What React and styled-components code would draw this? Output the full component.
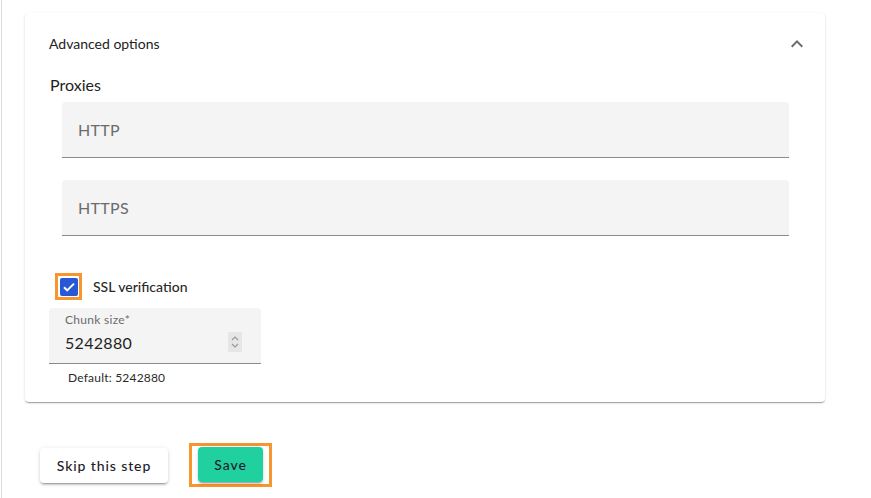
import React from "react";
import styled, { createGlobalStyle } from "styled-components";

const Global = createGlobalStyle`
  html, body { margin: 0; padding: 0; background: #fff; }
  body { font-family: "Lato", "Noto Sans", sans-serif; color: #1f1f1f; }
  * { box-sizing: border-box; }
`;

const Page = styled.div`
  margin-left: 1px;
  border-left: 1px solid #dcdcdc;
  min-height: 498px;
  padding: 13px 0 0 23px;
`;

const Card = styled.section`
  width: 800px;
  background: #fff;
  border-radius: 4px;
  box-shadow: 0 2px 1px -1px rgba(0,0,0,.2), 0 1px 1px 0 rgba(0,0,0,.14), 0 1px 3px 0 rgba(0,0,0,.12);
  padding-bottom: 17px;
`;

const Header = styled.div`
  height: 62px;
  display: flex;
  align-items: center;
  justify-content: space-between;
  padding: 0 16px 0 24px;
  font-size: 14px;
  color: #222;
  span { margin-top: -1px; }
`;

const Body = styled.div`
  padding: 0 24px;
`;

const SectionTitle = styled.div`
  font-size: 16px;
  line-height: 20px;
  color: #222;
  margin-left: 1px;
`;

const Fields = styled.div`
  display: flex;
  flex-direction: column;
  gap: 22px;
  margin: 7px 12px 0 13px;
`;

const FilledField = styled.div`
  height: 56px;
  background: #f4f4f4;
  border-radius: 4px 4px 0 0;
  border-bottom: 1px solid #8a8a8a;
  display: flex;
  align-items: center;
  padding: 0 16px;
  font-size: 16px;
  color: #6b6b6b;
  letter-spacing: 0.3px;
`;

const CheckRow = styled.label`
  display: flex;
  align-items: center;
  gap: 11px;
  margin: 37px 0 0 6px;
  font-size: 14px;
  font-weight: 500;
  color: #2a2a2a;
`;

const FocusRing = styled.span`
  width: 27px;
  height: 27px;
  border: 3px solid #f7952e;
  display: flex;
  align-items: center;
  justify-content: center;
`;

const CheckBox = styled.span`
  width: 18px;
  height: 18px;
  border-radius: 2px;
  background: #2758d6;
  display: flex;
  align-items: center;
  justify-content: center;
`;

const NumberField = styled.div`
  width: 212px;
  height: 56px;
  margin-top: 8px;
  background: #f4f4f4;
  border-radius: 4px 4px 0 0;
  border-bottom: 1px solid #8a8a8a;
  padding: 5px 16px 0 16px;
  display: flex;
  flex-direction: column;
`;

const SmallLabel = styled.div`
  font-size: 12px;
  line-height: 14px;
  color: #6b6b6b;
  letter-spacing: 0.3px;
`;

const ValueRow = styled.div`
  display: flex;
  align-items: center;
  justify-content: space-between;
  margin-top: 5px;
  font-size: 16px;
  color: #1f1f1f;
  letter-spacing: 0.3px;
`;

const Spinner = styled.span`
  width: 14px;
  height: 20px;
  background: #e6e6e6;
  display: flex;
  align-items: center;
  justify-content: center;
  margin-right: 3px;
`;

const Helper = styled.div`
  font-size: 12px;
  color: #2a2a2a;
  margin: 6px 0 0 19px;
  letter-spacing: 0.2px;
`;

const Actions = styled.div`
  display: flex;
  align-items: center;
  gap: 21px;
  margin: 41px 0 0 15px;
`;

const Button = styled.button`
  height: 35px;
  padding: 0;
  border: none;
  border-radius: 4px;
  font-family: inherit;
  font-size: 14px;
  font-weight: 500;
  letter-spacing: 0.9px;
  white-space: nowrap;
  color: #1c1c2b;
  background: ${(p) => (p.$primary ? "#21d09f" : "#fff")};
  box-shadow: 0 3px 1px -2px rgba(0,0,0,.2), 0 2px 2px 0 rgba(0,0,0,.14), 0 1px 5px 0 rgba(0,0,0,.12);
  width: ${(p) => p.$w}px;
`;

const ButtonRing = styled.span`
  border: 3px solid #f7952e;
  padding: 1px 6px 2px 6px;
  display: flex;
`;

export default function App() {
  return (
    <>
      <Global />
      <Page>
        <Card>
          <Header>
            <span>Advanced options</span>
            <svg width="24" height="24" viewBox="0 0 24 24" fill="#6a6a6a">
              <path d="M12 8l-6 6 1.41 1.41L12 10.83l4.59 4.58L18 14z" />
            </svg>
          </Header>
          <Body>
            <SectionTitle>Proxies</SectionTitle>
            <Fields>
              <FilledField>HTTP</FilledField>
              <FilledField>HTTPS</FilledField>
            </Fields>
            <CheckRow>
              <FocusRing>
                <CheckBox>
                  <svg width="16" height="16" viewBox="0 0 16 16">
                    <path d="M3 8.2l3.2 3.2L13 4.6" stroke="#fff" strokeWidth="2" fill="none" />
                  </svg>
                </CheckBox>
              </FocusRing>
              SSL verification
            </CheckRow>
            <NumberField>
              <SmallLabel>Chunk size*</SmallLabel>
              <ValueRow>
                <span>5242880</span>
                <Spinner>
                  <svg width="10" height="16" viewBox="0 0 10 16" fill="none" stroke="#9a9a9a" strokeWidth="1.2">
                    <path d="M2 6l3-3 3 3" />
                    <path d="M2 10l3 3 3-3" />
                  </svg>
                </Spinner>
              </ValueRow>
            </NumberField>
            <Helper>Default: 5242880</Helper>
          </Body>
        </Card>
        <Actions>
          <Button $w={128}>Skip this step</Button>
          <ButtonRing>
            <Button $primary $w={65}>Save</Button>
          </ButtonRing>
        </Actions>
      </Page>
    </>
  );
}
